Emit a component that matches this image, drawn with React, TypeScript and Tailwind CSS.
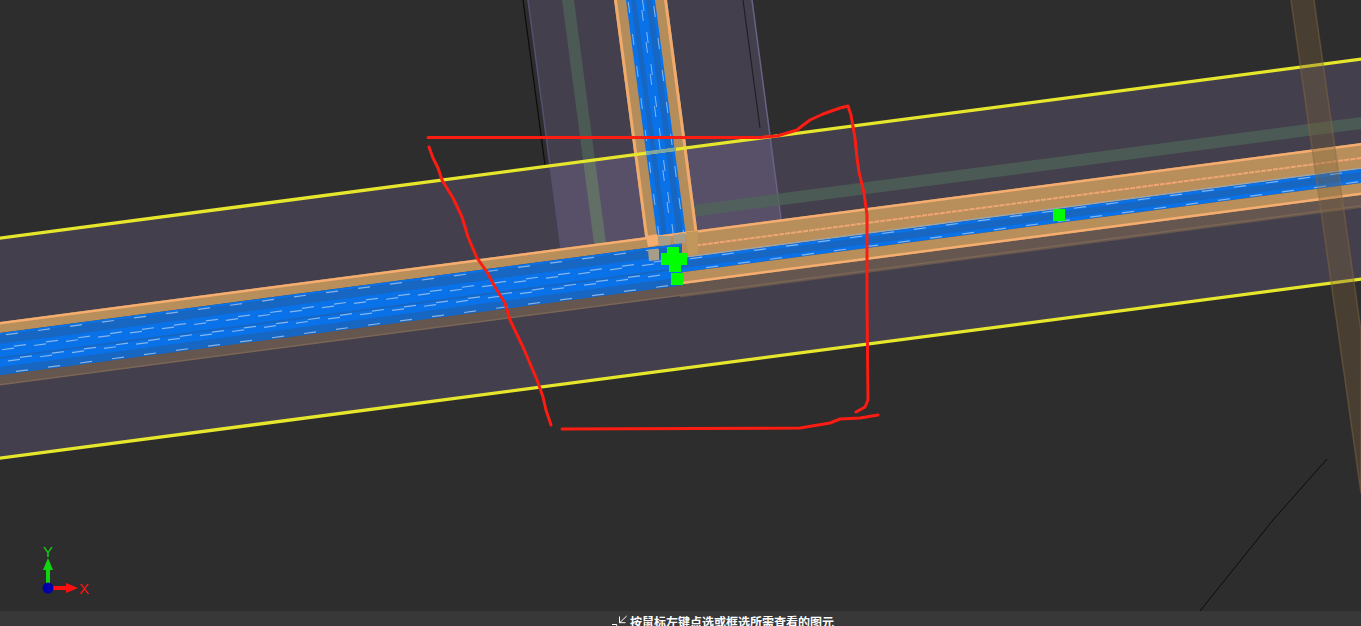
const k = 0.1315

// bands that run along the long road, y0 = y at x=0
const hBand = (a: number, b: number, x0 = 0, x1 = 1361) =>
  `${x0},${a - k * x0} ${x1},${a - k * x1} ${x1},${b - k * x1} ${x0},${b - k * x0}`

// bands that run along the cross road, x0 = x at y=0
const vBand = (a: number, b: number, y0: number, y1: number) =>
  `${a + k * y0},${y0} ${b + k * y0},${y0} ${b + k * y1},${y1} ${a + k * y1},${y1}`

const range = (from: number, to: number, step: number) => {
  const out: number[] = []
  for (let v = from; v < to; v += step) out.push(v)
  return out
}

const leftRows = [
  { y: 335.5, off: 6 },
  { y: 348, off: 14 },
  { y: 350, off: 2 },
  { y: 360, off: 20 },
  { y: 362, off: 8 },
  { y: 373.5, off: 16 },
]

const rightRows = [
  { y: 349.5, off: 690 },
  { y: 360.5, off: 706 },
]

const crossRows = [
  { x: 628, off: 2 },
  { x: 640.5, off: 10 },
  { x: 642.5, off: 0 },
  { x: 653, off: 6 },
]

const Scene = () => (
  <svg width="1361" height="611" viewBox="0 0 1361 611" className="block">
    {/* wide lavender bands */}
    <polygon points={hBand(238, 458)} fill="#433f4c" />
    <polygon points={vBand(528, 752, 0, 240)} fill="#433f4c" />
    <polygon points="549.8,165.7 770,136.7 780.8,219.3 560.6,248.3" fill="#584f69" />
    <line x1="528" y1="0" x2="561" y2="248" stroke="#565070" strokeWidth="1.5" />
    <line x1="752" y1="0" x2="781" y2="219" stroke="#6a6284" strokeWidth="1.5" />
    <line x1="523" y1="0" x2="545" y2="165" stroke="#0c0c0c" strokeWidth="1.2" />
    <line x1="743" y1="0" x2="760" y2="128" stroke="#222026" strokeWidth="1.2" />

    {/* faded green stripes */}
    <polygon points={vBand(562, 574, 0, 248)} fill="#4f6658" fillOpacity="0.7" />
    <polygon points={vBand(562, 574, 161, 246)} fill="#67736a" fillOpacity="0.8" />
    <polygon points={hBand(296, 308, 692, 1361)} fill="#4f6658" fillOpacity="0.7" />

    {/* cross road */}
    <polygon points={vBand(614, 667, 0, 240)} fill="#b58d5a" />
    <polygon points={vBand(614, 617, 0, 240)} fill="#f0ab6c" />
    <polygon points={vBand(664, 667, 0, 240)} fill="#f0ab6c" />
    <polygon points={vBand(626, 655, 0, 235)} fill="#0a72e8" />
    <polygon points={vBand(631, 636, 0, 235)} fill="#1766c2" />
    <polygon points={vBand(646, 652, 0, 235)} fill="#1766c2" />
    {crossRows.map(r =>
      range(r.off, 235, 32).map(y => (
        <line
          key={`${r.x}-${y}`}
          x1={r.x + k * y}
          y1={y}
          x2={r.x + k * (y + 11)}
          y2={y + 11}
          stroke="#a6c6ec"
          strokeOpacity="0.8"
          strokeWidth="1"
        />
      )),
    )}

    {/* long road, brown shoulder first */}
    <polygon points={hBand(374, 387, 680, 1361)} fill="#65574f" />
    <polygon points={hBand(375, 385, 0, 680)} fill="#65574f" />
    <polygon points={hBand(384, 385.5, 0, 1361)} fill="#7b6555" />

    {/* left part */}
    <polygon points={hBand(322, 333, 0, 690)} fill="#b88f5a" />
    <polygon points={hBand(322, 324.5, 0, 690)} fill="#f5ad70" />
    <polygon points={hBand(333, 375, 0, 682)} fill="#0a72e8" />
    <polygon points={hBand(335, 344, 0, 682)} fill="#1766c2" />
    <polygon points={hBand(357, 359, 0, 682)} fill="#1766c2" />
    <polygon points={hBand(367, 375, 0, 682)} fill="#1766c2" />
    {leftRows.map(r =>
      range(r.off, 660, 32).map(x => (
        <line
          key={`${r.y}-${x}`}
          x1={x}
          y1={r.y - k * x}
          x2={x + 12}
          y2={r.y - k * (x + 12)}
          stroke="#a6c6ec"
          strokeOpacity="0.8"
          strokeWidth="1.2"
        />
      )),
    )}

    {/* right part */}
    <polygon points={hBand(322, 348, 682, 1361)} fill="#b88f5a" />
    <polygon points={hBand(322, 324.5, 682, 1361)} fill="#f5ad70" />
    <line
      x1="690"
      y1={337 - k * 690}
      x2="1361"
      y2={337 - k * 1361}
      stroke="#f0a672"
      strokeWidth="2"
      strokeDasharray="5 1"
    />
    <polygon points={hBand(346.5, 348, 682, 1361)} fill="#9fa4a8" />
    <polygon points={hBand(348, 362, 682, 1361)} fill="#0a72e8" />
    <polygon points={hBand(351, 358, 682, 1361)} fill="#1766c2" />
    <polygon points={hBand(362, 374, 682, 1361)} fill="#b88f5a" />
    <polygon points={hBand(371.5, 374, 682, 1361)} fill="#f5ad70" />
    {rightRows.map(r =>
      range(r.off, 1361, 32).map(x => (
        <line
          key={`${r.y}-${x}`}
          x1={x}
          y1={r.y - k * x}
          x2={x + 12}
          y2={r.y - k * (x + 12)}
          stroke="#a6c6ec"
          strokeOpacity="0.8"
          strokeWidth="1.2"
        />
      )),
    )}

    {/* junction patches */}
    <polygon points="646,236 657,234 659,245 648,247" fill="#f5ad70" />
    <polygon points="658,236 671,236 670,245 659,246" fill="#a89d86" />
    <polygon points="673,235 685,233 686,243 674,244" fill="#a89d86" />
    <polygon points="648,250 659,249 659,260 649,261" fill="#a89d86" />
    <polygon points="686,232 698,231 698,254 688,255" fill="#c2975c" />

    {/* yellow edges */}
    <polygon points={hBand(236.5, 239.8)} fill="#e6e62c" />
    <polygon points={hBand(456.5, 459.8)} fill="#e6e62c" />
    {/* cross road shows through the edge */}
    <polygon points={hBand(236.5, 239.8, 646, 676)} fill="#7fa6a0" />

    {/* tan stripe running top right */}
    <polygon
      points="1290.7,-2 1313.7,-2 1361,331 1361,493"
      fill="#7a5f38"
      fillOpacity="0.35"
      stroke="#8a6a48"
      strokeOpacity="0.45"
      strokeWidth="1.5"
    />

    {/* markers */}
    <rect x="1053" y="209" width="12" height="12" fill="#00ff00" />
    <rect x="667" y="247" width="12" height="12" fill="#00ff00" />
    <rect x="661" y="253" width="26" height="12" fill="#00ff00" />
    <rect x="669" y="263" width="12" height="9" fill="#00ff00" />
    <rect x="671" y="273" width="12" height="12" fill="#00ff00" />

    {/* thin black line lower right */}
    <polyline points="1327,459 1273,520 1200,611" fill="none" stroke="#0c0c0c" strokeWidth="1" />

    {/* hand drawn markup */}
    <g fill="none" stroke="#fb1c12" strokeWidth="3" strokeLinecap="round" strokeLinejoin="round">
      <polyline points="428,137.5 760,137.5 777,136 797,130 802,126 810,120 823,114 840,108 848,106 851,115 855,138 857,158 859,172 864,193 867,215 867,300 868,400 865,407 856,412" />
      <polyline points="878,415 860,418 840,419 830,423 800,428 562,429" />
      <polyline points="429,147 433,158 438,168 442,180 453,198 462,217 468,237 477,258 487,272 495,287 505,303 510,320 523,347 537,380 543,397 546,410 551,425" />
    </g>

    {/* axis gizmo */}
    <rect x="46" y="568" width="4" height="16" fill="#11d411" />
    <polygon points="48,558 53,570 43,570" fill="#11d411" />
    <rect x="53" y="586" width="14" height="4" fill="#ff1010" />
    <polygon points="78,588 66,583 66,593" fill="#ff1010" />
    <circle cx="48" cy="588" r="5.5" fill="#0000a8" />
    <text x="48" y="557" textAnchor="middle" fontSize="15" fill="#11d411" fontFamily="Liberation Sans, sans-serif">
      Y
    </text>
    <text x="84" y="594" textAnchor="middle" fontSize="15" fill="#ff1010" fontFamily="Liberation Sans, sans-serif">
      X
    </text>
  </svg>
)

const App = () => {
  return (
    <div className="flex h-[626px] w-[1361px] flex-col overflow-hidden bg-[#2d2d2d]">
      <Scene />
      <div className="flex h-[15px] items-start gap-[2px] overflow-hidden bg-[#383838] pl-[610px]">
        <svg width="18" height="15" viewBox="0 0 18 15" className="shrink-0" fill="none" stroke="#fff" strokeWidth="1">
          <path d="M2 13.5h4.7v2" />
          <path d="M16.7 5l-7 6.7M9.5 5.5v6.2h6" />
        </svg>
        <span className="pt-[2px] font-['Noto_Sans_CJK_SC',sans-serif] text-[12px] leading-[17px] font-bold whitespace-nowrap text-white">
          按鼠标左键点选或框选所需查看的图元
        </span>
      </div>
    </div>
  )
}

export default App
